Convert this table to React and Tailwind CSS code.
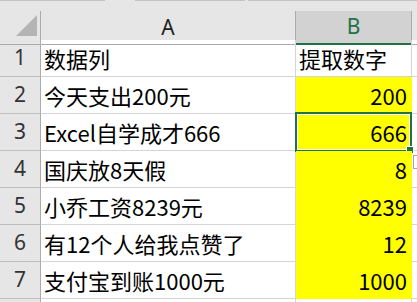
import React from "react";

const rows = [
  { text: "数据列", num: "提取数字", head: true },
  { text: "今天支出200元", num: "200" },
  { text: "Excel自学成才666", num: "666", active: true },
  { text: "国庆放8天假", num: "8" },
  { text: "小乔工资8239元", num: "8239" },
  { text: "有12个人给我点赞了", num: "12" },
  { text: "支付宝到账1000元", num: "1000" },
];

const cjk = { fontFamily: '"Noto Sans CJK SC", "Noto Sans", sans-serif' };

function RowHeader({ n }) {
  return (
    <div className="flex items-center justify-center bg-[#e6e6e6] text-[#333] border-r border-b border-r-[#ababab] border-b-[#bfbfbf] text-[21px]">
      {n}
    </div>
  );
}

function Row({ n, row }) {
  return (
    <div className="grid grid-cols-[41px_255px_116px_1fr] h-[37px]">
      <RowHeader n={n} />
      <div
        className="flex items-center pl-[3px] border-r border-b border-[#d4d4d4] text-[22px] text-black whitespace-nowrap overflow-hidden"
        style={cjk}
      >
        {row.text}
      </div>
      {row.head ? (
        <div
          className="flex items-center pl-[3px] border-r border-b border-[#d4d4d4] text-[22px] text-black whitespace-nowrap"
          style={cjk}
        >
          {row.num}
        </div>
      ) : (
        <div
          className="relative flex items-center justify-end pr-[5px] bg-[#ffff00] text-[22px] text-black"
          style={cjk}
        >
          {row.num}
          {row.active && (
            <div className="absolute -left-px -top-[2px] right-0 -bottom-px border-2 border-[#217346]">
              <div className="w-full h-full border border-white" />
              <div className="absolute -right-[4px] -bottom-[4px] w-[6px] h-[6px] bg-[#217346] border border-white box-content" />
            </div>
          )}
        </div>
      )}
      <div className="border-b border-[#d4d4d4]" />
    </div>
  );
}

export default function App() {
  return (
    <div
      className="relative w-[417px] h-[302px] overflow-hidden bg-white"
      style={{ fontFamily: '"Noto Sans", "Noto Sans CJK SC", sans-serif' }}
    >
      {/* strip under the formula bar */}
      <div className="h-[11px] bg-[#e6e6e6] flex items-start">
        <div className="h-px w-[105px] bg-[#c3c3c3]" />
        <div className="h-px w-[30px]" />
        <div className="h-px w-[110px] bg-[#c3c3c3]" />
        <div className="h-px w-[3px]" />
        <div className="h-px flex-1 bg-[#c3c3c3]" />
      </div>

      {/* column headers */}
      <div className="grid grid-cols-[41px_255px_116px_1fr] h-[29px] bg-[#e6e6e6]">
        <div className="relative border-r border-b border-[#ababab]">
          <svg className="absolute left-[16px] top-[4px]" width="21" height="21" viewBox="0 0 21 21">
            <polygon points="21,0 21,21 0,21" fill="#b4b4b4" />
          </svg>
        </div>
        <div className="flex items-center justify-center border-r border-b border-[#ababab] text-[21px] text-[#222]">
          A
        </div>
        <div className="flex items-center justify-center bg-[#d2d2d2] border-r border-r-[#ababab] border-b-2 border-b-[#217346] text-[21px] text-[#217346]">
          B
        </div>
        <div className="border-b border-[#ababab]" />
      </div>

      {rows.map((row, i) => (
        <Row key={i} n={i + 1} row={row} />
      ))}

      <div className="grid grid-cols-[41px_255px_116px_1fr] h-[10px]">
        <div className="bg-[#e6e6e6] border-r border-[#ababab]" />
        <div className="border-r border-[#d4d4d4]" />
        <div className="border-r border-[#d4d4d4]" />
        <div />
      </div>

      {/* paste options button, cut at the edge */}
      <div className="absolute left-[413px] top-[155px] w-[16px] h-[14px] bg-white border border-[#a6a6a6]" />
    </div>
  );
}
